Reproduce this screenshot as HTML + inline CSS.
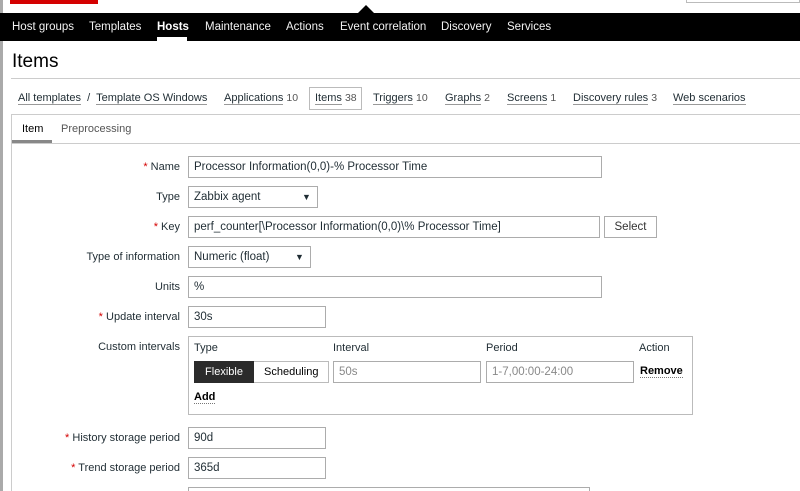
<!DOCTYPE html>
<html style="overflow:hidden;width:800px;height:491px"><head><style>
*{margin:0;padding:0;box-sizing:border-box}
body{width:800px;height:491px;overflow:hidden;background:#fff;font-family:"Liberation Sans",Arial,sans-serif;font-size:11px;color:#1f2c33;position:relative}
.a{position:absolute;white-space:nowrap}
.nav{position:absolute;left:0;top:13px;width:800px;height:28px;background:#000}
.nav span{position:absolute;top:8px;color:#f2f2f2;font-size:11.5px}
.inp{position:absolute;border:1px solid #acacac;height:22px;padding:4px 5px;background:#fff;font-size:11.5px}
.lbl{position:absolute;right:620px;text-align:right;white-space:nowrap}
.r{color:#d40000}
.lnk{border-bottom:1px solid #999;color:#1f2c33}
.cnt{color:#555;font-size:10.5px}
.arr{position:absolute;font-size:9px}
</style></head><body>
<div class="a" style="left:0;top:0;width:3px;height:491px;background:#aaa"></div>
<div class="a" style="left:10px;top:0;width:88px;height:4px;background:#d40000"></div>
<div class="a" style="left:686px;top:0;width:114px;height:3px;border:1px solid #bbb;border-top:none"></div>
<div class="nav">
<span style="left:12px">Host groups</span>
<span style="left:89px">Templates</span>
<span style="left:157px;font-weight:bold;color:#fff">Hosts</span>
<span style="left:205px">Maintenance</span>
<span style="left:286px">Actions</span>
<span style="left:340px">Event correlation</span>
<span style="left:441px">Discovery</span>
<span style="left:507px">Services</span>
<div class="a" style="left:157px;top:24px;width:30px;height:4px;background:#fff"></div>
</div>
<div class="a" style="left:358px;top:5px;width:0;height:0;border-left:8px solid transparent;border-right:8px solid transparent;border-bottom:8px solid #000"></div>
<div class="a" style="left:12px;top:51px;font-size:19px;color:#000">Items</div>
<div class="a" style="left:11px;top:78px;width:789px;height:1px;background:#ccc"></div>
<div class="a" style="left:18px;top:92px"><span class="lnk">All templates</span> &nbsp;/&nbsp; <span class="lnk">Template OS Windows</span></div>
<div class="a" style="left:224px;top:92px"><span class="lnk">Applications</span> <span class="cnt">10</span></div>
<div class="a" style="left:309px;top:87px;width:53px;height:23px;border:1px solid #bbb"></div>
<div class="a" style="left:315px;top:92px"><span class="lnk">Items</span> <span class="cnt">38</span></div>
<div class="a" style="left:373px;top:92px"><span class="lnk">Triggers</span> <span class="cnt">10</span></div>
<div class="a" style="left:445px;top:92px"><span class="lnk">Graphs</span> <span class="cnt">2</span></div>
<div class="a" style="left:507px;top:92px"><span class="lnk">Screens</span> <span class="cnt">1</span></div>
<div class="a" style="left:573px;top:92px"><span class="lnk">Discovery rules</span> <span class="cnt">3</span></div>
<div class="a" style="left:673px;top:92px"><span class="lnk">Web scenarios</span></div>
<div class="a" style="left:11px;top:114px;width:800px;height:400px;border:1px solid #ccc"></div>
<div class="a" style="left:12px;top:143px;width:790px;height:1px;background:#ccc"></div>
<div class="a" style="left:22px;top:123px;color:#000">Item</div>
<div class="a" style="left:61px;top:123px;color:#555">Preprocessing</div>
<div class="a" style="left:12px;top:140px;width:40px;height:3px;background:#888"></div>

<div class="lbl" style="top:161px"><span class="r">*</span> Name</div>
<div class="inp" style="left:188px;top:156px;width:414px">Processor Information(0,0)-% Processor Time</div>
<div class="lbl" style="top:191px">Type</div>
<div class="inp" style="left:188px;top:186px;width:130px">Zabbix agent<span class="arr" style="left:113px;top:5px">▼</span></div>
<div class="lbl" style="top:221px"><span class="r">*</span> Key</div>
<div class="inp" style="left:188px;top:216px;width:412px">perf_counter[\Processor Information(0,0)\% Processor Time]</div>
<div class="inp" style="left:604px;top:216px;width:53px;text-align:center;color:#333">Select</div>
<div class="lbl" style="top:251px">Type of information</div>
<div class="inp" style="left:188px;top:246px;width:123px">Numeric (float)<span class="arr" style="left:106px;top:5px">▼</span></div>
<div class="lbl" style="top:281px">Units</div>
<div class="inp" style="left:188px;top:276px;width:414px">%</div>
<div class="lbl" style="top:311px"><span class="r">*</span> Update interval</div>
<div class="inp" style="left:188px;top:306px;width:138px">30s</div>
<div class="lbl" style="top:341px">Custom intervals</div>
<div class="a" style="left:188px;top:336px;width:505px;height:79px;border:1px solid #bbb"></div>
<div class="a" style="left:194px;top:342px">Type</div>
<div class="a" style="left:333px;top:342px">Interval</div>
<div class="a" style="left:486px;top:342px">Period</div>
<div class="a" style="left:639px;top:342px">Action</div>
<div class="a" style="left:194px;top:361px;width:135px;height:22px;border:1px solid #bbb"></div>
<div class="a" style="left:194px;top:361px;width:60px;height:22px;background:#2b2b2b;color:#fff;text-align:center;padding-top:5px">Flexible</div>
<div class="a" style="left:264px;top:366px;color:#000">Scheduling</div>
<div class="inp" style="left:333px;top:361px;width:148px;color:#888">50s</div>
<div class="inp" style="left:486px;top:361px;width:148px;color:#888">1-7,00:00-24:00</div>
<div class="a" style="left:640px;top:365px;font-weight:bold;color:#000;border-bottom:1px dotted #777">Remove</div>
<div class="a" style="left:194px;top:391px;font-weight:bold;color:#000;border-bottom:1px dotted #777">Add</div>
<div class="lbl" style="top:432px"><span class="r">*</span> History storage period</div>
<div class="inp" style="left:188px;top:427px;width:138px">90d</div>
<div class="lbl" style="top:462px"><span class="r">*</span> Trend storage period</div>
<div class="inp" style="left:188px;top:457px;width:138px">365d</div>
<div class="inp" style="left:188px;top:487px;width:402px"></div>
</body></html>
